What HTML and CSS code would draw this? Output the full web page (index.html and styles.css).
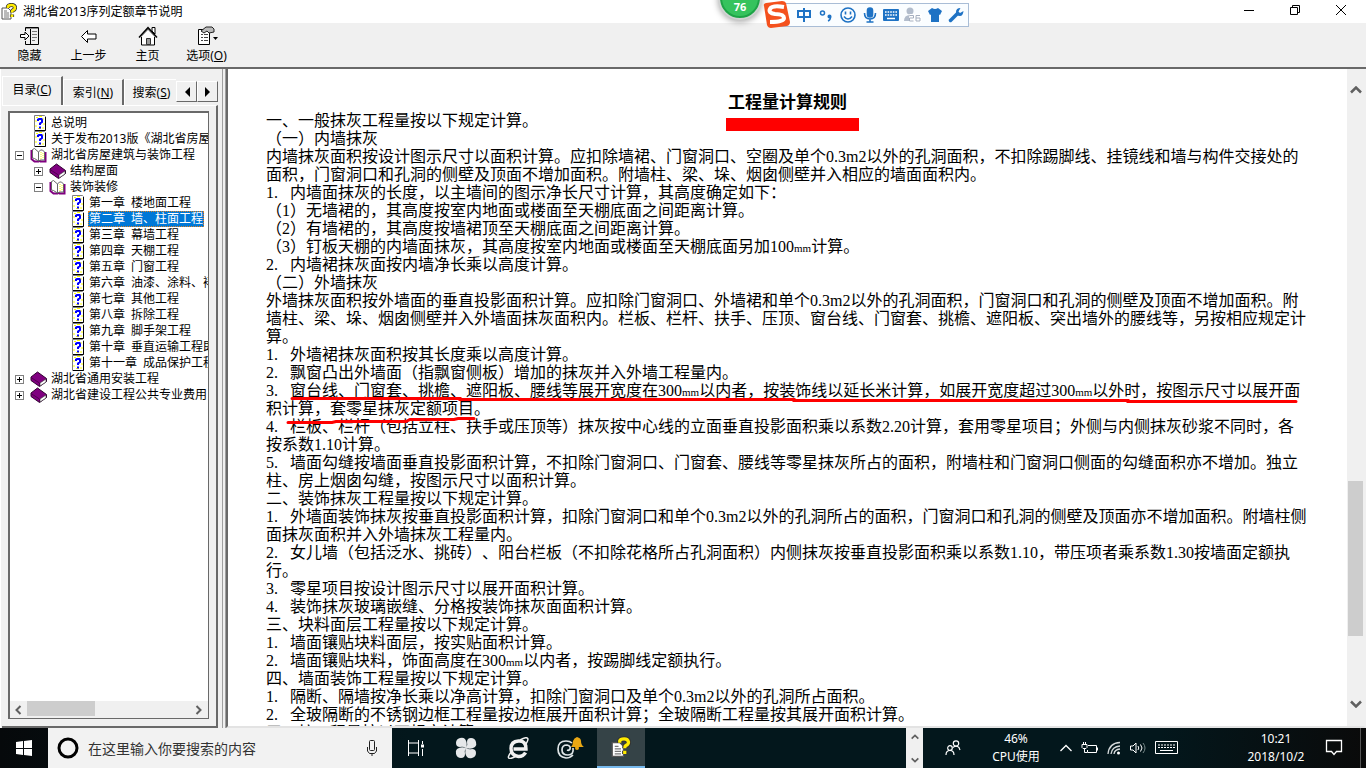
FILE: index.html
```html
<!DOCTYPE html>
<html lang="zh-CN">
<head>
<meta charset="utf-8">
<title>湖北省2013序列定额章节说明</title>
<link rel="stylesheet" href="styles.css">
</head>
<body>
<svg class="defs" width="0" height="0" aria-hidden="true">
  <symbol id="help" viewBox="0 0 16 17">
    <path d="M1 5h6l3 3v8H1z" fill="#fff" stroke="#555"/>
    <path d="M3 8h3M3 10h5M3 12h5M3 14h5" stroke="#777"/>
    <path d="M7 5V3.500Q7.500 2 10.500 2T14 4.500Q14 6.500 12 7.200Q11 7.600 11 9.500M11 11.500V14" fill="none" stroke="#333" stroke-width="4.200"/>
    <path d="M7 5V3.500Q7.500 2 10.500 2T14 4.500Q14 6.500 12 7.200Q11 7.600 11 9.500M11 11.500V14" fill="none" stroke="#ffeb00" stroke-width="2.600"/>
  </symbol>
  <symbol id="topic" viewBox="0 0 18 16">
    <path d="M4.500 .5h10l1 1v14h-11z" fill="#fff" stroke="#808080"/>
    <path d="M15.500 2v13.500H5" fill="none" stroke="#000"/>
    <path d="M6 2.500h2M13 3v2M6 5v2M14 8v2M6 10v2M8 13.500h3M13 12v2M9 1.500h3" stroke="#ff0"/>
    <path d="M8 6V4.500L9 4h2.500l.5 1v2L10 8.500V10M10 11.500v2" fill="none" stroke="#00f" stroke-width="2"/>
  </symbol>
  <symbol id="book" viewBox="0 0 18 16">
    <path d="M1 6L7.500 1l9 6.500v3l-7 5L1 9.500z" fill="#800080" stroke="#300030"/>
    <path d="M10 12l6-4v3l-6 4z" fill="#fff" stroke="#333" stroke-width=".6"/>
    <path d="M1 6.500l8.500 5.500v3" fill="none" stroke="#500050"/>
  </symbol>
  <symbol id="open-book" viewBox="0 0 18 16">
    <path d="M1.500 3v9l3 2.500h4l1-1 1 1h5V5" fill="none" stroke="#800080" stroke-width="2"/>
    <path d="M2.500 2.500l2-1 4 3.500v9l-4-2.500-2-.5zM8.500 5l2-2h2l2 2v8h-4l-2 1z" fill="#fff" stroke="#666"/>
    <path d="M11 5v7M13 6v6" stroke="#ff0" stroke-dasharray="1"/>
  </symbol>
  <symbol id="up" viewBox="0 0 12 8"><path d="M1 6.500l5-5 5 5" fill="none" stroke="#606060" stroke-width="2.500"/></symbol>
  <symbol id="down" viewBox="0 0 12 8"><path d="M1 1.500l5 5 5-5" fill="none" stroke="#606060" stroke-width="2.500"/></symbol>
</svg>

<div class="screen">
  <header class="titlebar">
    <svg class="app-icon"><use href="#help"/></svg>
    <h1 class="caption">湖北省2013序列定额章节说明</h1>
    <div class="window-buttons">
      <button aria-label="最小化"><svg width="12" height="12"><path d="M1 6.500h10" stroke="#000"/></svg></button>
      <button aria-label="还原"><svg width="12" height="12" fill="none" stroke="#000"><path d="M1.500 3.500h7v7h-7zM3.500 3V1.500h7v7H9"/></svg></button>
      <button aria-label="关闭"><svg width="12" height="12"><path d="M1 1l10 10M11 1L1 11" stroke="#000"/></svg></button>
    </div>
  </header>

  <nav class="toolbar" aria-label="工具栏">
    <button><svg width="20" height="20" fill="none" stroke="#000"><path d="M5.500 5V1.500h13v17h-13V15M10.500 2v16"/><path d="M6 2.500h12" stroke="#888"/><path d="M12 5.500h5M12 8.500h5M12 11.500h5M12 14.500h3" stroke="#777"/><path d="M.5 8.500H5V6l4 4-4 4v-2.500H.5z" fill="#fff"/></svg><span>隐藏</span></button>
    <button><svg width="20" height="20"><path d="M2.500 10.500L8.500 4.500v3.500h8.500v5H8.500v3.500z" fill="#fff" stroke="#000"/></svg><span>上一步</span></button>
    <button><svg width="20" height="20"><path d="M3.500 10v9h13v-9L10 3z" fill="#fff" stroke="#000"/><path d="M14 1.500h3V8l-3-3z" fill="#fff" stroke="#000"/><path d="M1 11.500L10 1.500l9 10" fill="none" stroke="#000" stroke-width="1.500"/><path d="M2.500 11.500l7.500-8 7.500 8" fill="none" stroke="#aaa"/><path d="M8.500 18.500v-6h4v6z" fill="#999" stroke="#333"/></svg><span>主页</span></button>
    <button><svg width="22" height="20"><path d="M2.500 3.500h11v15h-11z" fill="#fff" stroke="#000"/><path d="M5 8.500h2m1 0h4M5 11.500h2m1 0h4M5 14.500h2m1 0h4" stroke="#444"/><path d="M5 5l5-4h6l2 2v3l-5 1-2-2-3 2z" fill="#bbb" stroke="#222"/><path d="M17 11h5l-2.500 3z"/></svg><span>选项(<u>O</u>)</span></button>
  </nav>

  <main class="workspace">
    <aside class="sidebar">
      <div class="tabs">
        <button class="tab active">目录(<u>C</u>)</button>
        <button class="tab">索引(<u>N</u>)</button>
        <button class="tab last">搜索(<u>S</u>)</button>
        <button class="spin" aria-label="向左"><svg width="6" height="10"><path d="M6 0v10L1 5z"/></svg></button>
        <button class="spin" aria-label="向右"><svg width="6" height="10"><path d="M0 0v10l5-5z"/></svg></button>
      </div>
      <div class="page">
        <div class="tree-box">
          <ul class="tree">
            <li><div class="row"><i class="slot"></i><svg><use href="#topic"/></svg><a href="#">总说明</a></div></li>
            <li><div class="row"><i class="slot"></i><svg><use href="#topic"/></svg><a href="#">关于发布2013版《湖北省房屋建筑</a></div></li>
            <li><div class="row"><button class="toggle open" aria-label="折叠"></button><svg><use href="#open-book"/></svg><a href="#">湖北省房屋建筑与装饰工程</a></div>
              <ul>
                <li><div class="row"><button class="toggle" aria-label="展开"></button><svg><use href="#book"/></svg><a href="#">结构屋面</a></div></li>
                <li><div class="row"><button class="toggle open" aria-label="折叠"></button><svg><use href="#open-book"/></svg><a href="#">装饰装修</a></div>
                  <ul>
                    <li><div class="row"><i class="slot"></i><svg><use href="#topic"/></svg><a href="#">第一章&ensp;楼地面工程</a></div></li>
                    <li><div class="row"><i class="slot"></i><svg><use href="#topic"/></svg><a href="#" class="selected">第二章&ensp;墙、柱面工程</a></div></li>
                    <li><div class="row"><i class="slot"></i><svg><use href="#topic"/></svg><a href="#">第三章&ensp;幕墙工程</a></div></li>
                    <li><div class="row"><i class="slot"></i><svg><use href="#topic"/></svg><a href="#">第四章&ensp;天棚工程</a></div></li>
                    <li><div class="row"><i class="slot"></i><svg><use href="#topic"/></svg><a href="#">第五章&ensp;门窗工程</a></div></li>
                    <li><div class="row"><i class="slot"></i><svg><use href="#topic"/></svg><a href="#">第六章&ensp;油漆、涂料、裱糊工程</a></div></li>
                    <li><div class="row"><i class="slot"></i><svg><use href="#topic"/></svg><a href="#">第七章&ensp;其他工程</a></div></li>
                    <li><div class="row"><i class="slot"></i><svg><use href="#topic"/></svg><a href="#">第八章&ensp;拆除工程</a></div></li>
                    <li><div class="row"><i class="slot"></i><svg><use href="#topic"/></svg><a href="#">第九章&ensp;脚手架工程</a></div></li>
                    <li><div class="row"><i class="slot"></i><svg><use href="#topic"/></svg><a href="#">第十章&ensp;垂直运输工程即</a></div></li>
                    <li><div class="row"><i class="slot"></i><svg><use href="#topic"/></svg><a href="#">第十一章&ensp;成品保护工程</a></div></li>
                  </ul>
                </li>
              </ul>
            </li>
            <li><div class="row"><button class="toggle" aria-label="展开"></button><svg><use href="#book"/></svg><a href="#">湖北省通用安装工程</a></div></li>
            <li><div class="row"><button class="toggle" aria-label="展开"></button><svg><use href="#book"/></svg><a href="#">湖北省建设工程公共专业费用</a></div></li>
          </ul>
          <div class="hscroll">
            <svg width="8" height="10"><path d="M6.500 1l-4 4 4 4" fill="none" stroke="#606060" stroke-width="2"/></svg>
            <div class="htrack"><div class="hthumb"></div></div>
            <svg width="8" height="10"><path d="M1.500 1l4 4-4 4" fill="none" stroke="#606060" stroke-width="2"/></svg>
          </div>
        </div>
      </div>
    </aside>
    <div class="splitter"></div>
    <section class="viewer">
      <article class="document">
        <h2><span class="heading">工程量计算规则<i class="mark"></i></span></h2>
        <p>一、一般抹灰工程量按以下规定计算。</p>
        <p>（一）内墙抹灰</p>
        <p>内墙抹灰面积按设计图示尺寸以面积计算。应扣除墙裙、门窗洞口、空圈及单个0.3m2以外的孔洞面积，不扣除踢脚线、挂镜线和墙与构件交接处的面积，门窗洞口和孔洞的侧壁及顶面不增加面积。附墙柱、梁、垛、烟囱侧壁并入相应的墙面面积内。</p>
        <p><b class="n">1.</b>内墙面抹灰的长度，以主墙间的图示净长尺寸计算，其高度确定如下：</p>
        <p>（1）无墙裙的，其高度按室内地面或楼面至天棚底面之间距离计算。</p>
        <p>（2）有墙裙的，其高度按墙裙顶至天棚底面之间距离计算。</p>
        <p>（3）钉板天棚的内墙面抹灰，其高度按室内地面或楼面至天棚底面另加100<span class="unit">mm</span>计算。</p>
        <p><b class="n">2.</b>内墙裙抹灰面按内墙净长乘以高度计算。</p>
        <p>（二）外墙抹灰</p>
        <p>外墙抹灰面积按外墙面的垂直投影面积计算。应扣除门窗洞口、外墙裙和单个0.3m2以外的孔洞面积，门窗洞口和孔洞的侧壁及顶面不增加面积。附墙柱、梁、垛、烟囱侧壁并入外墙面抹灰面积内。栏板、栏杆、扶手、压顶、窗台线、门窗套、挑檐、遮阳板、突出墙外的腰线等，另按相应规定计算。</p>
        <p><b class="n">1.</b>外墙裙抹灰面积按其长度乘以高度计算。</p>
        <p><b class="n">2.</b>飘窗凸出外墙面（指飘窗侧板）增加的抹灰并入外墙工程量内。</p>
        <p class="marked"><b class="n">3.</b>窗台线、门窗套、挑檐、遮阳板、腰线等展开宽度在300<span class="unit">mm</span>以内者，按装饰线以延长米计算，如展开宽度超过300<span class="unit">mm</span>以外时，按图示尺寸以展开面积计算，套零星抹灰定额项目。
          <svg class="pen" width="1040" height="48" fill="none" stroke="#f00" stroke-width="3" stroke-linecap="round" aria-hidden="true"><path d="M26 16.500H194V17.500H528V18.500H862V19.500H1030M22 40.500H66L70 39.500H140L144 37.500H188L192 36.500H208"/></svg></p>
        <p><b class="n">4.</b>栏板、栏杆（包括立柱、扶手或压顶等）抹灰按中心线的立面垂直投影面积乘以系数2.20计算，套用零星项目；外侧与内侧抹灰砂浆不同时，各按系数1.10计算。</p>
        <p><b class="n">5.</b>墙面勾缝按墙面垂直投影面积计算，不扣除门窗洞口、门窗套、腰线等零星抹灰所占的面积，附墙柱和门窗洞口侧面的勾缝面积亦不增加。独立柱、房上烟囱勾缝，按图示尺寸以面积计算。</p>
        <p>二、装饰抹灰工程量按以下规定计算。</p>
        <p><b class="n">1.</b>外墙面装饰抹灰按垂直投影面积计算，扣除门窗洞口和单个0.3m2以外的孔洞所占的面积，门窗洞口和孔洞的侧壁及顶面亦不增加面积。附墙柱侧面抹灰面积并入外墙抹灰工程量内。</p>
        <p><b class="n">2.</b>女儿墙（包括泛水、挑砖）、阳台栏板（不扣除花格所占孔洞面积）内侧抹灰按垂直投影面积乘以系数1.10，带压项者乘系数1.30按墙面定额执行。</p>
        <p><b class="n">3.</b>零星项目按设计图示尺寸以展开面积计算。</p>
        <p><b class="n">4.</b>装饰抹灰玻璃嵌缝、分格按装饰抹灰面面积计算。</p>
        <p>三、块料面层工程量按以下规定计算。</p>
        <p><b class="n">1.</b>墙面镶贴块料面层，按实贴面积计算。</p>
        <p><b class="n">2.</b>墙面镶贴块料，饰面高度在300<span class="unit">mm</span>以内者，按踢脚线定额执行。</p>
        <p>四、墙面装饰工程量按以下规定计算。</p>
        <p><b class="n">1.</b>隔断、隔墙按净长乘以净高计算，扣除门窗洞口及单个0.3m2以外的孔洞所占面积。</p>
        <p><b class="n">2.</b>全玻隔断的不锈钢边框工程量按边框展开面积计算；全玻隔断工程量按其展开面积计算。</p>
        <p>五、柱工程量按以下规定计算。</p>
      </article>
      <div class="vscroll">
        <svg width="12" height="8"><use href="#up"/></svg>
        <div class="vtrack"><div class="vthumb"></div></div>
        <svg width="12" height="8"><use href="#down"/></svg>
      </div>
    </section>
  </main>

  <footer class="taskbar">
    <button class="start" aria-label="开始"><svg width="16" height="16" fill="#fff"><path d="M0 2l7-1v7H0zM8 1l8-1v8H8zM0 9h7v6l-7-1zM8 9h8v7l-8-1z"/></svg></button>
    <label class="search">
      <svg width="22" height="22"><circle cx="11" cy="11" r="9" fill="none" stroke="#000" stroke-width="3"/></svg>
      <input type="text" aria-label="搜索" placeholder="在这里输入你要搜索的内容">
      <svg width="12" height="18" fill="none" stroke="#222"><rect x="3.500" y="1.500" width="5" height="10" rx="1"/><path d="M1.500 8v4l2 2.500h5l2-2.500V8M6 14v3"/></svg>
    </label>
    <button class="task first" aria-label="任务视图"><svg width="18" height="18" fill="none" stroke="#fff"><path d="M1.500 1v3h10V1M1.500 4v10M11.500 4v10M1.500 17v-3h10v3M15.500 2v3M15.500 10v7"/><path d="M14 5.500h3v3h-3z" fill="#fff" stroke="none"/></svg></button>
    <button class="task" aria-label="四叶草"><svg width="22" height="22" fill="#e6e8ea"><path d="M11 11Q13 6 10 2 8 0 5 1 1 2 1 6q0 4 4 4 3-1 6 1zM11 11q5 2 9-1 2-2 1-5-1-4-5-4t-4 4q1 3-1 6zM11 11q-2 5 1 9 2 2 5 1 4-1 4-5t-4-4q-3 1-6-1zM11 11q-5-2-9 1-2 2-1 5 1 4 5 4t4-4q-1-3 1-6z"/></svg></button>
    <button class="task" aria-label="浏览器"><svg width="22" height="22" fill="none" stroke="#f1f1f1"><path d="M18.500 15.500q-2 4-7 4-7.500-1-7.500-8t7.500-7.500 7.500 8H6.500" stroke-width="3.400"/><path d="M5 14Q-1 21 3 21.500 5 21.500 9 19M13 3q7-4 8-1 0 2-2 5" stroke-width="1.500"/></svg></button>
    <button class="task" aria-label="通知"><svg width="28" height="24" fill="none"><path d="M17 19q-3 3-7 3-8-1-8-9t8-8q4 0 6 2M17 12q1 7-5 7-6 0-6-5t5-5q4 1 3 4-1 2-3 1" stroke="#dfe5e7" stroke-width="1.700"/><path d="M15 11q2-2 2-6 1-3 4-4 4 1 4 4 0 4 3 6z" fill="#eaa814"/><circle cx="21" cy="12" r="2" fill="#eaa814"/></svg></button>
    <button class="task current" aria-label="帮助"><svg width="20" height="22"><use href="#help"/></svg></button>
    <div class="spread"></div>
    <div class="band-scroll"><svg width="8" height="6"><use href="#up"/></svg><svg width="8" height="6"><use href="#down"/></svg></div>
    <button class="people" aria-label="人脉"><svg width="16" height="16" fill="none" stroke="#fff" stroke-width="1.200"><circle cx="5" cy="8" r="2.300"/><circle cx="11" cy="3.500" r="2.700"/><path d="M1 15q0-4.500 4-4.500t4 4.500M8 7.500q3-2.500 6 0l1 2.500"/></svg></button>
    <div class="cpu"><span>46%</span><span>CPU使用</span></div>
    <div class="tray">
      <svg width="14" height="10" fill="none" stroke="#fff"><path d="M1.500 8L7 2.500 12.500 8" stroke-width="1.300"/></svg>
      <svg width="18" height="14" fill="none" stroke="#fff"><path d="M7 4.500h8.500v7h-9V9M16.500 6.500v3M1 3.500h5v3l-1 1H2l-1-1zM2.500 1v2M4.500 1v2M3.500 8v3.500H6"/></svg>
      <svg width="14" height="14" fill="none" stroke="#d5dadb"><path d="M1 13Q2 2 13 1.500M4 13q1-7.500 9-8M7 13q.5-4.500 6-5" stroke-width="1.300"/><circle cx="11.500" cy="12" r="1.500" fill="#fff" stroke="none"/></svg>
      <svg width="18" height="14" fill="none" stroke="#fff"><path d="M1.500 5v4H4l3 3V2L4 5zM9 5q1.500 2 0 4M11.500 3.500q3 3.500 0 7"/><path d="M14 2q4 5 0 10" stroke="#788"/></svg>
      <svg width="24" height="14" fill="none" stroke="#fff"><path d="M.5.500h22v12H.5z"/><path d="M3 4h18M3 6.500h18" stroke-dasharray="2 1"/><path d="M5 9.500h13"/></svg>
    </div>
    <time class="clock"><span>10:21</span><span>2018/10/2</span></time>
    <button class="notice" aria-label="操作中心"><svg width="18" height="18"><path d="M1.500 1.500h15v11h-5L9 15.500l-2.500-3h-5z" fill="none" stroke="#fff" stroke-width="1.300"/></svg></button>
  </footer>

  <div class="ball">76</div>
  <div class="ime">
    <svg class="sogou" width="28" height="28"><path d="M1 5Q0 3 3 2L19 0q3 0 4 2l4 19q0 3-3 4L8 27q-3 0-4-3z" fill="#f4511e"/><path d="M21 6Q9 4 7 8t5 5q9 0 9 4t-14 4" fill="none" stroke="#fff" stroke-width="4"/></svg>
    <svg width="16" height="16" fill="none" stroke="#1e72c4" stroke-width="2"><path d="M2 4h12v6H2zM8 1v14"/></svg>
    <svg width="16" height="16" fill="none" stroke="#1e72c4" stroke-width="1.500"><circle cx="4.500" cy="6" r="2"/><circle cx="11.500" cy="9.500" r="1.300" fill="#1e72c4"/><path d="M12.500 10q0 3-2.500 4"/></svg>
    <svg width="16" height="16" fill="none" stroke="#1e72c4" stroke-width="1.600"><circle cx="8" cy="8" r="7"/><path d="M5.500 4.500v3M10.500 4.500v3M4 9.500q4 5 8 0"/></svg>
    <svg width="16" height="16" fill="none" stroke="#1e72c4" stroke-width="1.600"><rect x="5.500" y="1" width="5" height="9" rx="2.500" fill="#1e72c4"/><path d="M2.500 6q0 6 5.500 6t5.500-6M8 12v3M4.500 15h7"/></svg>
    <svg width="16" height="16"><rect y="2" width="16" height="12" rx="1" fill="#1e72c4"/><path d="M2 5h12M2 8h12" stroke="#fff" stroke-width="1.600" stroke-dasharray="1.600 1"/><path d="M4 11.500h8" stroke="#fff" stroke-width="1.500"/></svg>
    <svg width="18" height="16"><circle cx="6" cy="4" r="3.500" fill="#b3bdcc"/><path d="M0 14q0-6 6-6t6 6z" fill="#b3bdcc"/><path d="M5.500 8.500h5V11h-4v2.500h4M12 8.500h4.500v5H12v-5M12 11h4" fill="none" stroke="#fff" stroke-width="3"/><path d="M5.500 8.500h4V11h-4v3h4M16 8.500h-4v5.500h4v-3h-4" fill="none" stroke="#a5afbf"/></svg>
    <svg width="16" height="16"><path d="M1 4l4-3q3 2 6 0l4 3-2 4-1-.5V15H4V7.500L3 8z" fill="#1e72c4"/></svg>
    <svg width="16" height="16"><path d="M2.500 13.500l7-7" stroke="#1e72c4" stroke-width="3.500" stroke-linecap="round"/><path d="M12.500 1Q8 1 8 5t4 4q3 0 3.500-5L12 6l-1.500-1.500z" fill="#1e72c4"/></svg>
  </div>
</div>
</body>
</html>
```

FILE: styles.css
```css
* { box-sizing: border-box; }
body {
  margin: 0;
  font: 12px/16px "Noto Sans", "Noto Sans CJK SC", sans-serif;
  color: #000;
  text-spacing-trim: space-all;
}
svg { display: block; flex: none; }
button {
  border: 0; padding: 0; background: none; color: inherit;
  font: inherit;
  display: flex; align-items: center; justify-content: center;
}
ul { list-style: none; margin: 0; padding: 0; }
.defs { position: absolute; }
.screen {
  position: relative;
  height: 100vh;
  display: flex; flex-direction: column;
  overflow: hidden;
  background: #f0f0f0;
}

/* Title bar */
.titlebar { display: flex; align-items: center; height: 23px; flex: none; background: #fff; }
.app-icon { width: 16px; height: 17px; margin: 0 6px 0 1px; }
.caption { flex: 1; margin: 0; font-size: 12px; font-weight: 400; }
.window-buttons { display: flex; align-self: flex-start; padding-right: 2px; }
.window-buttons button { width: 46px; height: 20px; }

/* Toolbar */
.toolbar {
  display: flex; flex: none; height: 46px; padding-top: 3px;
  border-bottom: 2px solid #696969;
}
.toolbar button { flex-direction: column; justify-content: flex-start; gap: 2px; width: 59px; }

/* Contents pane */
.workspace { display: flex; flex: 1; min-height: 0; }
.sidebar {
  width: 218px; flex: none; padding: 7px 0 0 1px;
  display: flex; flex-direction: column;
  border-left: 1px solid #fff;
}
.tabs { display: flex; align-items: flex-end; height: 29px; }
.tab {
  width: 61px; height: 26px;
  border: solid #fff; border-width: 1px 0 0 1px;
  border-right: 2px solid #696969;
}
.tab.active { height: 29px; padding-bottom: 3px; }
.tab.last { width: 52px; padding-left: 2px; border-right: 0; }
.spin {
  width: 21px; height: 21px; margin-bottom: 3px;
  border: 1px solid #fff; border-right-color: #696969; border-bottom-color: #696969;
}
.page {
  flex: 1; min-height: 0; display: flex;
  padding: 5px 7px 7px 6px;
  border-top: 1px solid #fff;
  border-right: 2px solid #696969; border-bottom: 2px solid #696969;
}
.tree-box {
  flex: 1; min-width: 0; display: flex; flex-direction: column;
  background: #fff;
  border: 2px solid #696969;
  border-right-width: 1px; border-bottom-width: 1px;
}
.tree { flex: 1; min-height: 0; overflow: hidden; padding: 2px 0 0 5px; }
.tree ul { padding-left: 19px; }
.row { display: flex; align-items: center; height: 16px; white-space: nowrap; }
.row svg { width: 18px; height: 16px; margin-left: 6px; }
.row a { margin-left: 2px; padding: 0 1px; color: #000; text-decoration: none; }
.row .selected { background: #0078d7; color: #fff; outline: 1px dotted #e08020; outline-offset: -1px; }
.slot { width: 9px; flex: none; }
.toggle {
  width: 9px; height: 9px; flex: none; border: 1px solid #808080;
  background:
    linear-gradient(#000, #000) center / 5px 1px no-repeat,
    linear-gradient(#000, #000) center / 1px 5px no-repeat;
}
.toggle.open { background: linear-gradient(#000, #000) center / 5px 1px no-repeat; }
.hscroll {
  display: flex; align-items: center; height: 17px; flex: none;
  padding: 0 5px 0 4px; gap: 5px; background: #f0f0f0;
}
.htrack { flex: 1; align-self: stretch; }
.hthumb { width: 42%; height: 15px; background: #cdcdcd; }
.splitter { width: 8px; flex: none; border-left: 4px solid #f0f0f0; border-right: 1px solid #a0a0a0; background: linear-gradient(90deg, #a0a0a0 1px, #f0f0f0 1px); }

/* Document */
.viewer {
  flex: 1; min-width: 0; display: flex; overflow: hidden;
  background: #fff;
  border-left: 2px solid #696969; border-right: 2px solid #f0f0f0;
  border-bottom: 2px solid #e3e3e3;
}
.document {
  flex: 1; min-width: 0; padding: 25px 38px 0 38px;
  font: 16px/18px "Liberation Serif", "Noto Sans CJK SC", serif;
}
.document h2 { margin: 0; font-size: 17px; line-height: 18px; text-align: center; }
.document p { margin: 0; }
.heading { position: relative; }
.mark { position: absolute; left: -2px; top: 25px; width: 133px; height: 13px; background: #f00; }
.n { display: inline-block; width: 24px; font-weight: 400; }
.unit { font-size: 11px; line-height: 1px; }
.marked { position: relative; }
.pen { position: absolute; left: 0; top: 0; }
.vscroll {
  width: 17px; flex: none; display: flex; flex-direction: column; align-items: center;
  padding: 17px 0 18px; background: #f0f0f0;
}
.vtrack { flex: 1; width: 15px; display: flex; flex-direction: column; }
.vtrack::before { content: ""; flex: 387; }
.vtrack::after { content: ""; flex: 64; }
.vthumb { flex: 155; background: #cdcdcd; }

/* Taskbar */
.taskbar {
  display: flex; align-items: stretch; height: 40px; flex: none;
  color: #fff;
  background: linear-gradient(90deg, #06090b, #03171c 30%, #03171c 85%, #0a0a0a);
}
.start { width: 48px; }
.search {
  display: flex; align-items: center; width: 344px;
  padding: 0 14px 0 9px; gap: 9px; background: #f2f2f2;
}
.search input {
  flex: 1; min-width: 0; border: 0; padding: 0; background: none;
  font: 14px/20px "Noto Sans CJK SC", sans-serif;
}
.search input::placeholder { color: #333; opacity: 1; }
.task { width: 52px; }
.task.first { width: 48px; }
.task.current { width: 48px; margin-left: 1px; background: #354347; border-bottom: 2px solid #76b9ed; }
.spread { flex: 1; }
.band-scroll {
  width: 17px; display: flex; flex-direction: column; align-items: center; justify-content: space-between;
  padding: 6px 0 5px; background: #f0f0f0;
}
.people { width: 60px; }
.cpu, .clock { display: flex; flex-direction: column; align-items: center; justify-content: center; line-height: 18px; }
.cpu { width: 66px; }
.tray { display: flex; align-items: center; gap: 8px; padding-left: 10px; width: 196px; }
.clock { width: 62px; }
.notice { width: 54px; margin-right: 5px; border-right: 1px solid #555; }

/* Floating widgets */
.ball {
  position: absolute; left: 718px; top: -24px; width: 44px; height: 44px;
  padding-top: 21px; border: 2px solid #d0d3d2; border-radius: 50%;
  background: #35c35d; box-shadow: 0 2px 6px rgba(0, 0, 0, .35), inset 0 0 0 2px #1ea347;
  color: #fff; font-size: 11px; font-weight: 700; text-align: center;
}
.ime {
  position: absolute; left: 776px; top: 3px; height: 24px;
  display: flex; align-items: center; gap: 6px; padding: 0 5px 0 0;
  background: #fafdff; border: 1px solid #a9bdd6;
}
.ime svg:nth-child(n+5) { margin-right: -1px; }
.ime .sogou { margin: 0 -1px 0 -14px; }
```
